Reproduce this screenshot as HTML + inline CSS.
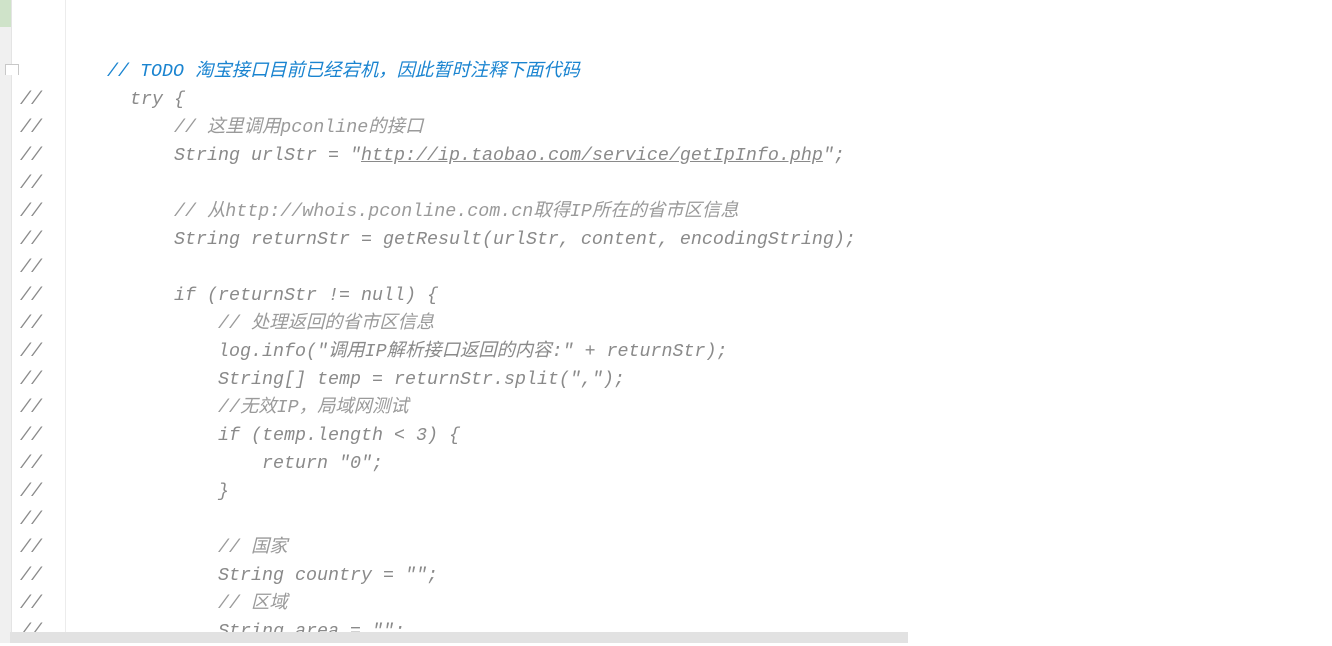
<!DOCTYPE html>
<html><head><meta charset="utf-8"><style>
html,body{margin:0;padding:0;width:1332px;height:643px;overflow:hidden;background:#fff;}
.g{position:absolute;left:0;top:0;width:12px;height:643px;background:#f0f0f0;}
.gr{position:absolute;left:0;top:0;width:12px;height:27px;background:#cfe3c9;}
.vl{position:absolute;left:65px;top:0;width:1px;height:643px;background:#ececec;}
.vl2{position:absolute;left:11px;top:0;width:1px;height:643px;background:#e4e4e4;}
pre{position:absolute;margin:0;font-family:"Liberation Mono","Noto Sans CJK SC",monospace;font-size:18.33px;line-height:28px;color:#8a8a8a;font-style:italic;}
.c{color:#9a9a9a;}
.t{color:#1a84d0;}
u{text-decoration:underline;}
.sb{position:absolute;left:10px;top:632px;width:898px;height:11px;background:#e2e2e2;}
.fold{position:absolute;left:5px;top:64px;width:12px;height:10px;border:1px solid #c8c8c8;border-bottom:none;background:#fff;}
</style></head><body>
<div class="g"></div><div class="gr"></div><div class="vl2"></div><div class="vl"></div>
<div class="fold"></div>
<pre style="left:107px;top:58px" class="t">// TODO 淘宝接口目前已经宕机，因此暂时注释下面代码</pre>
<pre style="left:20px;top:86px">//        try {
//            <span class="c">// 这里调用pconline的接口</span>
//            String urlStr = "<u>http://ip.taobao.com/service/getIpInfo.php</u>";
//
//            <span class="c">// 从http://whois.pconline.com.cn取得IP所在的省市区信息</span>
//            String returnStr = getResult(urlStr, content, encodingString);
//
//            if (returnStr != null) {
//                <span class="c">// 处理返回的省市区信息</span>
//                log.info("调用IP解析接口返回的内容:" + returnStr);
//                String[] temp = returnStr.split(",");
//                <span class="c">//无效IP，局域网测试</span>
//                if (temp.length &lt; 3) {
//                    return "0";
//                }
//
//                <span class="c">// 国家</span>
//                String country = "";
//                <span class="c">// 区域</span>
//                String area = "";</pre>
<div class="sb"></div>
</body></html>
